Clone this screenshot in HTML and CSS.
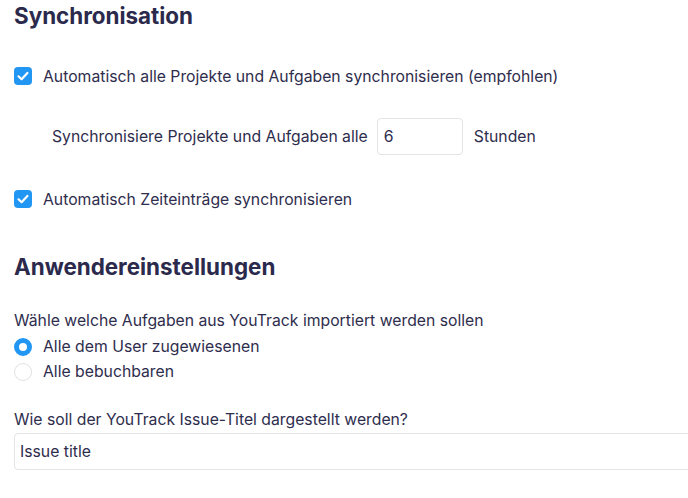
FILE: index.html
```html
<!DOCTYPE html>
<html lang="de">
<head>
<meta charset="utf-8">
<link rel="stylesheet" href="styles.css">
</head>
<body>
<main class="page">
  <h2 class="section-title">Synchronisation</h2>
  <label class="check-row first">
    <span class="checkbox"><svg viewBox="0 0 18 18" width="18" height="18"><path d="M4.5 9.3 L7.6 12.2 L13.4 5.9" fill="none" stroke="#fff" stroke-width="2.2" stroke-linecap="round" stroke-linejoin="round"/></svg></span>
    <span>Automatisch alle Projekte und Aufgaben synchronisieren (empfohlen)</span>
  </label>
  <div class="interval-row">
    <span>Synchronisiere Projekte und Aufgaben alle</span>
    <span class="input small">6</span>
    <span>Stunden</span>
  </div>
  <label class="check-row">
    <span class="checkbox"><svg viewBox="0 0 18 18" width="18" height="18"><path d="M4.5 9.3 L7.6 12.2 L13.4 5.9" fill="none" stroke="#fff" stroke-width="2.2" stroke-linecap="round" stroke-linejoin="round"/></svg></span>
    <span>Automatisch Zeiteinträge synchronisieren</span>
  </label>

  <h2 class="section-title second">Anwendereinstellungen</h2>
  <p class="question">Wähle welche Aufgaben aus YouTrack importiert werden sollen</p>
  <div class="radio-group">
    <label class="radio-row"><span class="radio checked"></span><span>Alle dem User zugewiesenen</span></label>
    <label class="radio-row"><span class="radio"></span><span>Alle bebuchbaren</span></label>
  </div>
  <p class="question q2">Wie soll der YouTrack Issue-Titel dargestellt werden?</p>
  <div class="input wide">Issue title</div>
</main>
</body>
</html>
```
FILE: styles.css
```css
* { box-sizing: border-box; }
html, body { margin: 0; padding: 0; background: #fff; }
body {
  font-family: "Inter", "Liberation Sans", sans-serif;
  color: #2e2d4d;
  font-size: 15.75px;
  overflow: hidden;
}
.page {
  padding: 0 0 0 14px;
  width: 720px;
}
.section-title {
  margin: 0;
  font-size: 22.4px;
  font-weight: 700;
  line-height: 32px;
  color: #2b2a4c;
}
.section-title.second { margin-top: 40px; }
.check-row {
  display: flex;
  align-items: center;
  gap: 11px;
  height: 24px;
}
.check-row.first { margin-top: 32px; }
.checkbox {
  width: 18px;
  height: 18px;
  border-radius: 4px;
  background: #2196f3;
  display: flex;
}
.interval-row {
  display: flex;
  align-items: center;
  gap: 9px;
  margin: 30px 0 32px 38px;
}
.interval-row .input { margin-right: 2px; }
.input {
  border: 1px solid #e3e3e8;
  border-radius: 4px;
  background: #fff;
  height: 37px;
  display: flex;
  align-items: center;
  padding-left: 6px;
}
.input.small { width: 86px; }
.input.wide { width: 700px; padding-left: 5px; margin-top: 1px; }
.question {
  margin: 26px 0 0;
  line-height: 24px;
}
.radio-group { display: flex; flex-direction: column; margin-top: 1px; }
.radio-row {
  display: flex;
  align-items: center;
  gap: 11px;
  height: 25px;
}
.radio {
  width: 18px;
  height: 18px;
  border-radius: 50%;
  border: 1px solid #e1e1e6;
  background: #fff;
}
.radio.checked {
  border: 5px solid #2196f3;
}
.question.q2 { margin-top: 24px; }
```
